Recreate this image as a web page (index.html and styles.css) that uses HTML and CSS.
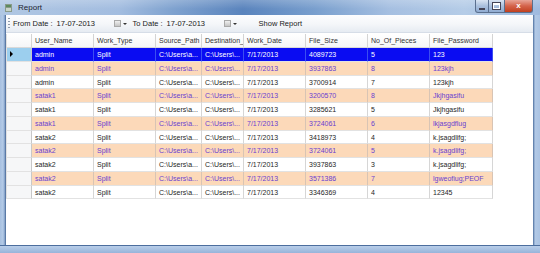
FILE: index.html
```html
<!DOCTYPE html>
<html>
<head>
<meta charset="utf-8">
<link rel="stylesheet" href="styles.css">
</head>
<body>
<div class="window">
  <div class="titlebar">
    <div class="app-icon">
      <svg width="9" height="10" viewBox="0 0 9 10"><rect x="1" y="1" width="7" height="8" fill="#8a9a8a"/><rect x="2" y="2" width="5" height="2" fill="#5d8a5d"/><rect x="2" y="5" width="5" height="3" fill="#c9d4c9"/></svg>
    </div>
    <div class="title">Report</div>
    <div class="spacer"></div>
    <div class="caption-buttons">
      <div class="cbtn minimize"><span class="min-bar"></span></div>
      <div class="cbtn maximize"><span class="max-box"></span></div>
      <div class="cbtn close">x</div>
    </div>
  </div>
  <div class="frame-mid">
    <div class="frame-side left"></div>
    <div class="client">
      <div class="toolbar">
        <div class="grip"></div>
        <span class="tlabel from-label">From Date :</span>
        <span class="date-text">17-07-2013</span>
        <span class="cal-icon"></span><span class="drop-arrow"></span>
        <span class="tlabel to-label">To Date :</span>
        <span class="date-text">17-07-2013</span>
        <span class="cal-icon"></span><span class="drop-arrow"></span>
        <span class="tlabel show-btn">Show Report</span>
      </div>
      <div class="grid-area">
        <div class="grid">
          <div class="hc rh"></div>
          <div class="hc">User_Name</div>
          <div class="hc">Work_Type</div>
          <div class="hc">Source_Path</div>
          <div class="hc">Destination_</div>
          <div class="hc">Work_Date</div>
          <div class="hc">File_Size</div>
          <div class="hc">No_Of_Pieces</div>
          <div class="hc">File_Password</div>

          <div class="c rh sel-rh"><span class="arrow"></span></div>
          <div class="c sel">admin</div><div class="c sel">Split</div><div class="c sel">C:\Users\a...</div><div class="c sel">C:\Users\...</div><div class="c sel">7/17/2013</div><div class="c sel">4089723</div><div class="c sel">5</div><div class="c sel">123</div>

          <div class="c rh"></div>
          <div class="c alt">admin</div><div class="c alt">Split</div><div class="c alt">C:\Users\a...</div><div class="c alt">C:\Users\...</div><div class="c alt">7/17/2013</div><div class="c alt">3937863</div><div class="c alt">8</div><div class="c alt">123kjh</div>

          <div class="c rh"></div>
          <div class="c">admin</div><div class="c">Split</div><div class="c">C:\Users\a...</div><div class="c">C:\Users\...</div><div class="c">7/17/2013</div><div class="c">3700914</div><div class="c">7</div><div class="c">123kjh</div>

          <div class="c rh"></div>
          <div class="c alt">satak1</div><div class="c alt">Split</div><div class="c alt">C:\Users\a...</div><div class="c alt">C:\Users\...</div><div class="c alt">7/17/2013</div><div class="c alt">3200570</div><div class="c alt">8</div><div class="c alt">Jkjhgasifu</div>

          <div class="c rh"></div>
          <div class="c">satak1</div><div class="c">Split</div><div class="c">C:\Users\a...</div><div class="c">C:\Users\...</div><div class="c">7/17/2013</div><div class="c">3285621</div><div class="c">5</div><div class="c">Jkjhgasifu</div>

          <div class="c rh"></div>
          <div class="c alt">satak1</div><div class="c alt">Split</div><div class="c alt">C:\Users\a...</div><div class="c alt">C:\Users\...</div><div class="c alt">7/17/2013</div><div class="c alt">3724061</div><div class="c alt">6</div><div class="c alt">lkjasgdflug</div>

          <div class="c rh"></div>
          <div class="c">satak2</div><div class="c">Split</div><div class="c">C:\Users\a...</div><div class="c">C:\Users\...</div><div class="c">7/17/2013</div><div class="c">3418973</div><div class="c">4</div><div class="c">k.jsagdlifg;</div>

          <div class="c rh"></div>
          <div class="c alt">satak2</div><div class="c alt">Split</div><div class="c alt">C:\Users\a...</div><div class="c alt">C:\Users\...</div><div class="c alt">7/17/2013</div><div class="c alt">3724061</div><div class="c alt">5</div><div class="c alt">k.jsagdlifg;</div>

          <div class="c rh"></div>
          <div class="c">satak2</div><div class="c">Split</div><div class="c">C:\Users\a...</div><div class="c">C:\Users\...</div><div class="c">7/17/2013</div><div class="c">3937863</div><div class="c">3</div><div class="c">k.jsagdlifg;</div>

          <div class="c rh"></div>
          <div class="c alt">satak2</div><div class="c alt">Split</div><div class="c alt">C:\Users\a...</div><div class="c alt">C:\Users\...</div><div class="c alt">7/17/2013</div><div class="c alt">3571386</div><div class="c alt">7</div><div class="c alt">lgweofiug;PEOF</div>

          <div class="c rh"></div>
          <div class="c">satak2</div><div class="c">Split</div><div class="c">C:\Users\a...</div><div class="c">C:\Users\...</div><div class="c">7/17/2013</div><div class="c">3346369</div><div class="c">4</div><div class="c">12345</div>
        </div>
      </div>
    </div>
    <div class="frame-side right"></div>
  </div>
  <div class="frame-bottom"></div>
</div>
</body>
</html>
```
FILE: styles.css
```css
* { box-sizing: border-box; }
html, body { margin: 0; padding: 0; }
body {
  width: 540px;
  height: 253px;
  overflow: hidden;
  font-family: "Liberation Sans", Arial, sans-serif;
  background: #8fb0d8;
}
.window {
  width: 540px;
  height: 253px;
  display: flex;
  flex-direction: column;
}
.titlebar {
  height: 15px;
  display: flex;
  align-items: center;
  background:
    linear-gradient(180deg, rgba(255,255,255,0.2) 0%, rgba(255,255,255,0) 60%),
    linear-gradient(90deg, #b0c7e3 0%, #a3bde0 22%, #7fa2cf 32%, #5a84bd 45%, #789ecd 58%, #a5bfe1 72%, #b5cce7 86%, #9fbadf 100%);
}
.app-icon { width: 9px; height: 10px; margin-left: 4px; display: flex; }
.title {
  margin-left: 5px;
  font-size: 8px;
  color: #1c2430;
  line-height: 15px;
}
.spacer { flex: 1; }
.caption-buttons {
  display: flex;
  align-self: flex-start;
  margin-right: 7px;
  height: 13px;
}
.cbtn {
  height: 13px;
  border: 1px solid #5a6f8e;
  border-top: none;
  display: flex;
  align-items: center;
  justify-content: center;
}
.minimize {
  width: 14px;
  border-radius: 0 0 0 3px;
  background: linear-gradient(180deg, #d9e4f2, #a9bfdc 50%, #90acd2);
}
.maximize {
  width: 16px;
  border-left: none;
  background: linear-gradient(180deg, #d9e4f2, #a9bfdc 50%, #90acd2);
}
.close {
  width: 28px;
  border-left: none;
  border-radius: 0 0 3px 0;
  background: linear-gradient(180deg, #e8a597, #d4634a 50%, #c1401f);
  color: #fff;
  font-size: 8px;
  font-weight: bold;
  line-height: 12px;
}
.min-bar { width: 6px; height: 2px; background: #fff; border: 0.5px solid #445; margin-top: 5px; }
.max-box { width: 7px; height: 6px; border: 1px solid #fff; border-top-width: 2px; outline: 0.5px solid #445; }
.frame-mid {
  flex: 1;
  display: flex;
}
.frame-side {
  width: 6px;
  background: linear-gradient(90deg, #a7c0e0, #b4cbe7 60%, #7d9bc4);
}
.frame-side.right {
  width: 7px;
  background: linear-gradient(90deg, #4c6e9e, #b2c9e6 30%, #a9c2e2);
}
.frame-side.left {
  border-right: 1px solid #5b7aa6;
}
.frame-bottom {
  height: 8px;
  border-top: 1px solid #4c6e9e;
  background: linear-gradient(180deg, #b9cee9, #97b4da);
}
.client {
  flex: 1;
  display: flex;
  flex-direction: column;
  background: #fff;
  min-width: 0;
}
.toolbar {
  height: 18px;
  display: flex;
  align-items: center;
  background: linear-gradient(180deg, #fdfdfe 0%, #f4f6f9 55%, #e6ebf2 100%);
  border-bottom: 1px solid #d6dde7;
  font-size: 7.5px;
  color: #1a1a1a;
}
.grip {
  width: 2px;
  height: 11px;
  margin-left: 2px;
  background: repeating-linear-gradient(180deg, #8e9aab 0 1px, transparent 1px 3px);
}
.tlabel { white-space: nowrap; }
.from-label { margin-left: 3px; }
.date-text { margin-left: 4px; width: 57px; }
.cal-icon {
  width: 7px;
  height: 7px;
  border: 1px solid #a9a9a9;
  background: linear-gradient(180deg, #f0f0f0, #c4c4c4);
}
.drop-arrow {
  margin-left: 2px;
  width: 0;
  height: 0;
  border-left: 2px solid transparent;
  border-right: 2px solid transparent;
  border-top: 2px solid #333;
}
.to-label { margin-left: 6px; }
.show-btn { margin-left: 22px; }
.grid-area {
  flex: 1;
  background: #fff;
  padding-top: 1px;
}
.grid {
  display: grid;
  grid-template-columns: 26px 62px 62px 46px 42px 62px 62px 62px 63px;
  grid-template-rows: 14px repeat(11, 13.75px);
  width: 487px;
  font-size: 7px;
}
.hc {
  border-right: 1px solid #d4d4d4;
  border-bottom: 1px solid #d9d9d9;
  background: linear-gradient(180deg, #ffffff, #f5f6f7);
  color: #333;
  padding-left: 3px;
  line-height: 13px;
  white-space: nowrap;
  overflow: hidden;
}
.hc.rh { padding: 0; border-left: 1px solid #e0e0e0; }
.c {
  border-right: 1px solid #d6d6d6;
  border-bottom: 1px solid #e2e2e2;
  background: #fff;
  color: #262626;
  padding-left: 3px;
  line-height: 13px;
  white-space: nowrap;
  overflow: hidden;
}
.c.rh {
  background: #f6f7f8;
  border-left: 1px solid #e0e0e0;
  border-right: 1px solid #c8c8c8;
  padding: 0;
}
.c.sel-rh {
  background: #9ccfee;
  display: flex;
  align-items: center;
  padding-left: 3px;
}
.arrow {
  width: 0;
  height: 0;
  border-top: 3px solid transparent;
  border-bottom: 3px solid transparent;
  border-left: 3px solid #000;
}
.c.sel {
  background: #0a0cf2;
  color: #fff;
  border-right-color: #3b4ef0;
}
.c.alt {
  background: #fcd9b9;
  color: #6a3fd0;
  border-right-color: #d8c4b4;
}
```
